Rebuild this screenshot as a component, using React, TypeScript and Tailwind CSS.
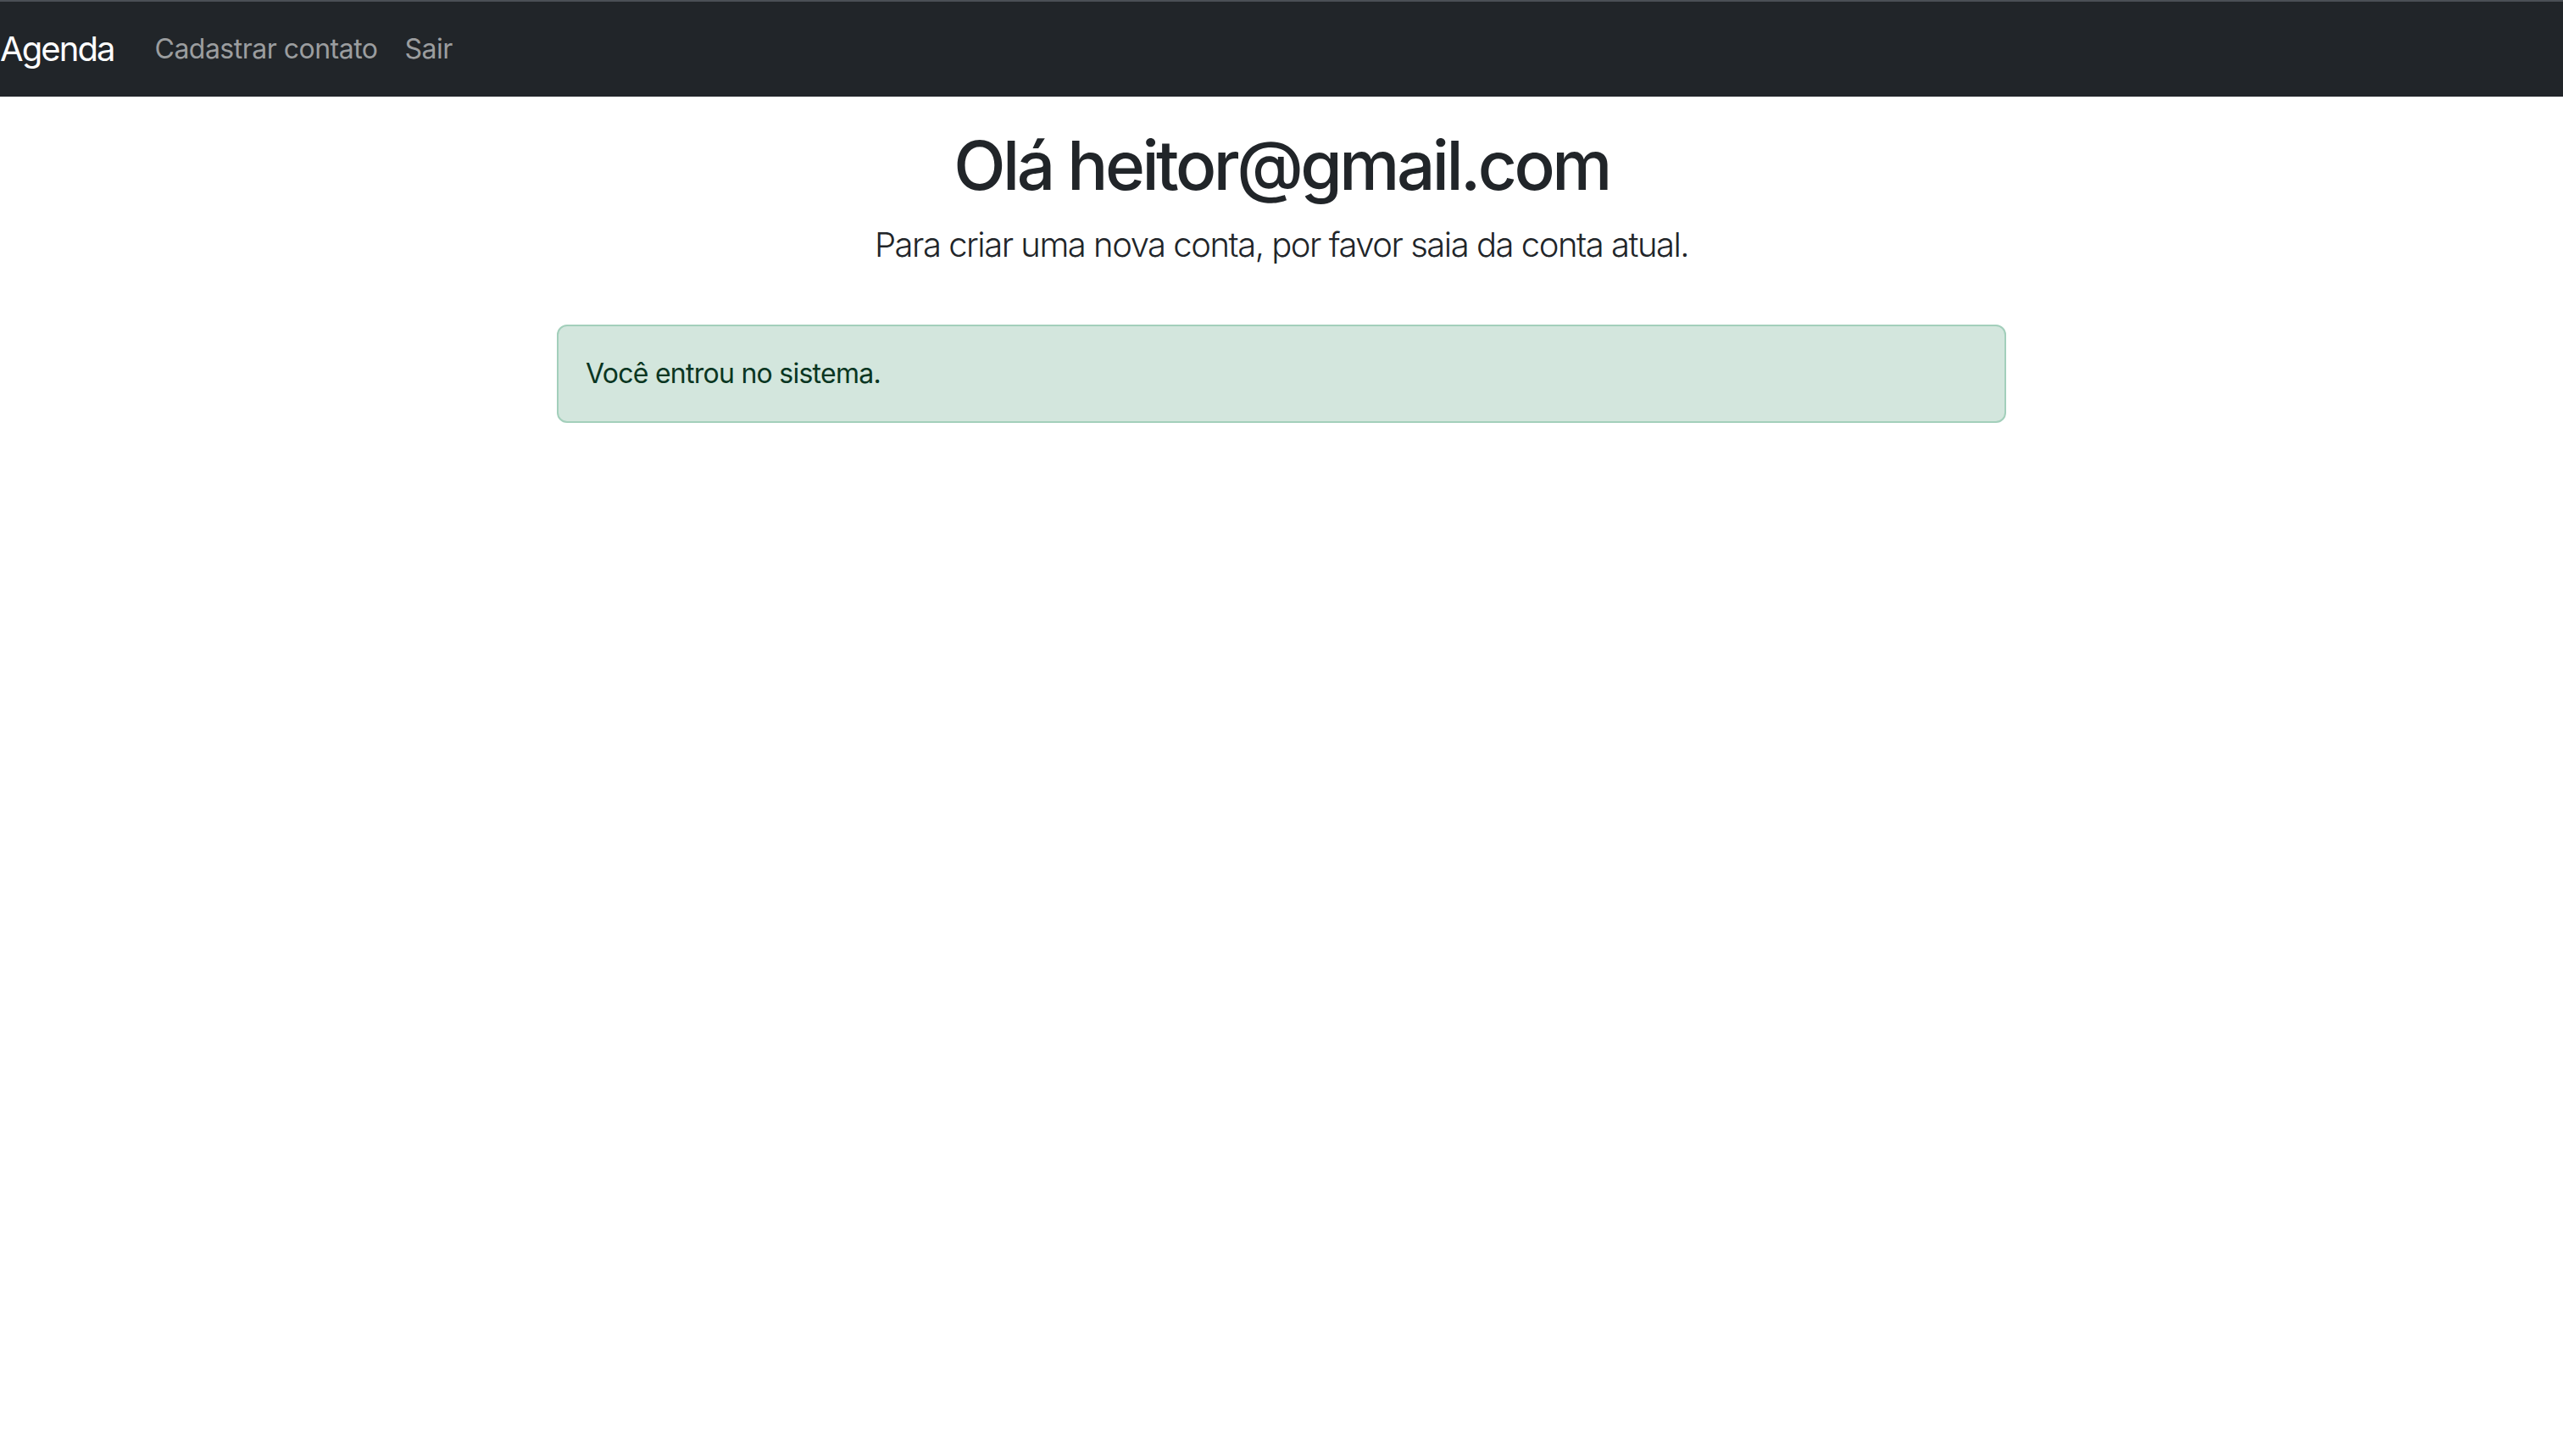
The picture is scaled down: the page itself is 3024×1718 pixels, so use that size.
import React from "react";

const font = { fontFamily: "Inter, 'Liberation Sans', sans-serif" };

export default function App() {
	return (
		<div className="min-h-screen bg-white text-[#212529]" style={font}>
			<nav className="border-t-2 border-[#4a4f55] bg-[#212529] py-[16px]">
				<div className="flex items-center">
					<a className="mr-[32px] py-[10px] text-[40px] leading-[60px] tracking-[-0.048em] text-white">Agenda</a>
					<a className="px-[16px] py-[16px] text-[32px] leading-[48px] tracking-[-0.016em] text-[#9b9d9f]">Cadastrar contato</a>
					<a className="px-[16px] py-[16px] text-[32px] leading-[48px] tracking-[-0.016em] text-[#9b9d9f]">Sair</a>
				</div>
			</nav>
			<main className="flex flex-col items-center">
				<h1 className="mt-[33px] mb-[16px] text-[80px] font-medium leading-[96px] tracking-[-0.044em]">Olá heitor@gmail.com</h1>
				<p className="text-[40px] font-light leading-[60px] tracking-[-0.037em]">Para criar uma nova conta, por favor saia da conta atual.</p>
				<div className="mt-[64px] w-[1710px] rounded-[12px] border-2 border-[#a3cfbb] bg-[#d3e6dd] p-[32px] text-[32px] leading-[48px] tracking-[-0.023em] text-[#0a3622]">
					Você entrou no sistema.
				</div>
			</main>
		</div>
	);
}
